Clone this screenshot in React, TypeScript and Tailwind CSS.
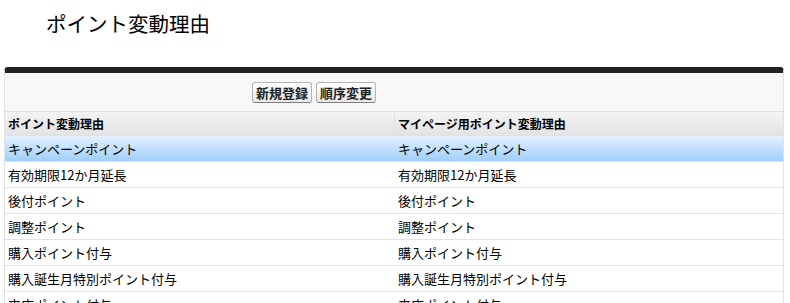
const ROWS = [
  ["キャンペーンポイント", "キャンペーンポイント"],
  ["有効期限12か月延長", "有効期限12か月延長"],
  ["後付ポイント", "後付ポイント"],
  ["調整ポイント", "調整ポイント"],
  ["購入ポイント付与", "購入ポイント付与"],
  ["購入誕生月特別ポイント付与", "購入誕生月特別ポイント付与"],
  ["来店ポイント付与", "来店ポイント付与"],
];

const font = "font-['Noto_Sans_CJK_JP','Noto_Sans',sans-serif]";

const App = () => {
  return (
    <div className={`w-[790px] h-[303px] overflow-hidden bg-white text-black ${font}`}>
      {/* title */}
      <h1 className="pl-[46px] pt-[8px] h-[67px] text-[20.5px] leading-[30px] font-normal">
        ポイント変動理由
      </h1>

      {/* page block */}
      <div className="ml-[4px] w-[780px] border-t-[6px] border-[#222] rounded-t-[4px] border-x border-x-[#e0e3e5] bg-[#f8f8f8]">
        {/* buttons */}
        <div className="flex h-[38px] items-center pl-[247px] gap-[4px]">
          {["新規登録", "順序変更"].map((b) => (
            <button
              key={b}
              className="h-[21px] px-[3px] text-[13px] leading-[19px] font-bold text-[#222] border border-[#b5b5b5] border-b-[#7f7f7f] rounded-[3px] bg-gradient-to-b from-white to-[#e8e8e8]"
            >
              {b}
            </button>
          ))}
        </div>

        {/* table */}
        <div className="bg-white">
          <div className="grid grid-cols-[390px_1fr] h-[25px] border-y border-[#e0e3e5] bg-gradient-to-b from-[#f3f3f3] to-[#e3e3e3] text-[12px] font-bold items-center">
            <div className="pl-[3px] h-full flex items-center border-r border-[#e0e3e5]">ポイント変動理由</div>
            <div className="pl-[3px]">マイページ用ポイント変動理由</div>
          </div>
          {ROWS.map(([a, b], i) => (
            <div
              key={i}
              className={`grid grid-cols-[390px_1fr] h-[26px] border-b border-[#e3e3e3] text-[13px] items-center ${
                i === 0 ? "bg-gradient-to-b from-[#e4f2ff] to-[#a0cefa]" : "bg-white"
              }`}
            >
              <div className="pl-[3px]">{a}</div>
              <div className="pl-[3px]">{b}</div>
            </div>
          ))}
        </div>
      </div>
    </div>
  );
};

export default App;
